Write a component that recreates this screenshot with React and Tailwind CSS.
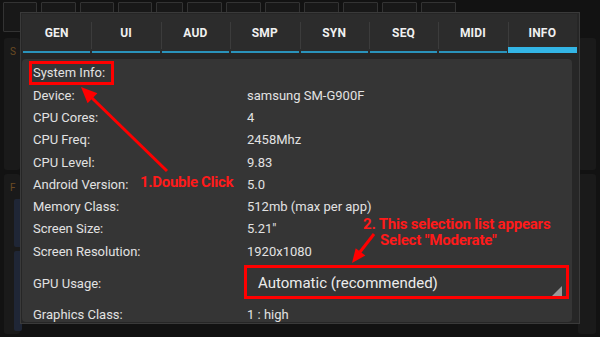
import { useState } from "react";

const tabs = ["GEN", "UI", "AUD", "SMP", "SYN", "SEQ", "MIDI", "INFO"];

const rows = [
  ["System Info:", ""],
  ["Device:", "samsung SM-G900F"],
  ["CPU Cores:", "4"],
  ["CPU Freq:", "2458Mhz"],
  ["CPU Level:", "9.83"],
  ["Android Version:", "5.0"],
  ["Memory Class:", "512mb (max per app)"],
  ["Screen Size:", "5.21\""],
  ["Screen Resolution:", "1920x1080"],
];

const topButtons = [34, 35, 34, 34, 27, 35, 35, 35, 35, 35, 35, 35];

export default function App() {
  const [active, setActive] = useState("INFO");

  return (
    <div
      className="relative w-[600px] h-[337px] overflow-hidden bg-[#121212]"
      style={{ fontFamily: "Roboto, 'Liberation Sans', sans-serif" }}
    >
      {/* BACKGROUND APP */}
      <div className="flex gap-[4px] px-[3px] pt-[2px]">
        {topButtons.map((w, i) => (
          <div
            key={i}
            className="h-[30px] border border-[#333] bg-[#181818] rounded-[1px]"
            style={{ width: w }}
          ></div>
        ))}
      </div>
      <div className="flex justify-between px-[4px] pt-[6px]">
        <div className="flex flex-col gap-[4px] w-[16px]">
          <div className="h-[132px] rounded-[3px] bg-[#1a1a1a] pt-[6px] pl-[6px] text-[10px] text-[#6b4a22]">
            S
          </div>
          <div className="h-[160px] rounded-[3px] bg-[#1a1a1a] pt-[6px] pl-[6px] text-[10px] text-[#6b4a22] flex flex-col gap-[4px]">
            F
            <div className="ml-[4px] w-[8px] h-[48px] rounded-[2px] bg-[#1f2636]"></div>
            <div className="ml-[4px] w-[8px] h-[80px] rounded-[2px] bg-[#1f2636]"></div>
          </div>
        </div>
        <div className="flex flex-col gap-[4px] w-[18px]">
          <div className="h-[132px] rounded-[3px] bg-[#1a1a1a]"></div>
          <div className="h-[160px] rounded-[3px] bg-[#1a1a1a]"></div>
        </div>
      </div>

      {/* DIALOG */}
      <div className="absolute left-[20px] top-[12px] w-[560px] h-[312px] bg-[#262626] border border-[#3a3a3a] px-[1px] pt-[1px] flex flex-col">
        <div className="flex h-[39px] w-[555px] bg-[#2c2c2c]">
          {tabs.map((t, i) => (
            <div
              key={t}
              onClick={() => setActive(t)}
              className="relative flex-1 flex items-center justify-center text-[12px] font-bold text-[#f0f0f0] tracking-[0.2px]"
            >
              {i > 0 && (
                <div className="absolute left-0 top-[8px] bottom-[4px] w-px bg-[#3c3c3c]"></div>
              )}
              <span className="-mt-[2px]">{t}</span>
              <div
                className={
                  active === t
                    ? "absolute left-0 right-0 bottom-0 h-[6px] bg-[#33b5e5]"
                    : "absolute left-[1px] right-[1px] bottom-0 h-[2px] bg-[#2a93bb]"
                }
              ></div>
            </div>
          ))}
        </div>

        <div className="mt-[6px] w-[550px] h-[263px] rounded-[4px] bg-[#353535] overflow-hidden pl-[11px] pt-[3px] text-[13px] text-[#e2e2e2]">
          {rows.map(([label, value]) => (
            <div key={label} className="flex items-center h-[22.3px]">
              <div className="w-[214px]">{label}</div>
              <div>{value}</div>
            </div>
          ))}
          <div className="flex items-center h-[42px]">
            <div className="w-[214px]">GPU Usage:</div>
            <div className="relative w-[318px] h-[30px] flex items-center pl-[11px] text-[15px] text-[#ececec] border-b border-[#5a5a5a]">
              Automatic (recommended)
              <svg className="absolute right-[3px] bottom-[2px]" width="10" height="10" viewBox="0 0 10 10">
                <polygon points="10,0 10,10 0,10" fill="#9a9a9a" />
              </svg>
            </div>
          </div>
          <div className="flex items-center h-[20px]">
            <div className="w-[214px]">Graphics Class:</div>
            <div>1 : high</div>
          </div>
        </div>
      </div>

      {/* ANNOTATIONS */}
      <div className="absolute left-[29px] top-[61px] w-[85px] h-[24px] border-[3px] border-[#ff0000]"></div>
      <div className="absolute left-[244px] top-[265px] w-[325px] h-[34px] border-[3px] border-[#ff0000]"></div>

      <svg className="absolute left-0 top-0" width="600" height="337" viewBox="0 0 600 337">
        <line x1="167" y1="171" x2="92" y2="98" stroke="#ff0000" strokeWidth="3" />
        <polygon points="81,87 97.4,93.2 87.6,103.2" fill="#ff0000" />
        <line x1="374" y1="234" x2="360" y2="252" stroke="#ff0000" strokeWidth="3" />
        <polygon points="352,263 365.3,255.4 355.7,248.2" fill="#ff0000" />
      </svg>

      <div className="absolute left-[140px] top-[172px] text-[15px] font-bold text-[#ff1a1a] tracking-[-0.3px] leading-[20px]">
        1.Double Click
      </div>
      <div className="absolute left-[363px] top-[216px] text-[15px] font-bold text-[#ff1a1a] tracking-[-0.2px] leading-[16px]">
        <div>2. This selection list appears</div>
        <div className="pl-[17px]">Select "Moderate"</div>
      </div>
    </div>
  );
}
